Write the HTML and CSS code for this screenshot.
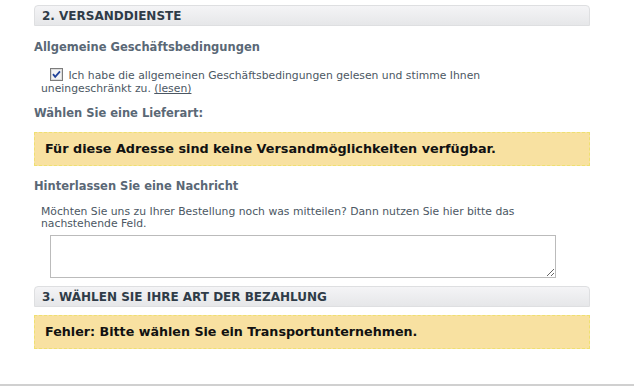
FILE: index.html
```html
<!DOCTYPE html>
<html lang="de">
<head>
    <meta charset="UTF-8">
    <meta name="viewport" content="width=device-width, initial-scale=1.0">
    <title>Kasse</title>
    <link rel="stylesheet" href="styles.css">
</head>
<body>
    <div class="checkout">
        <!-- Versand -->
        <div class="section-head">2. VERSANDDIENSTE</div>

        <h3 class="sub-title">Allgemeine Geschäftsbedingungen</h3>
        <p class="terms">
            <label class="check" for="agb">
                <input type="checkbox" id="agb" checked>
                <svg width="13" height="13" viewBox="0 0 13 13">
                    <rect x="0.5" y="0.5" width="12" height="12" fill="#f4f4f4" stroke="#7c7c7c"/>
                    <rect x="1.5" y="1.5" width="10" height="10" fill="none" stroke="#dcdcdc"/>
                    <path d="M3 6.2 L5.2 8.8 L10 3.4" fill="none" stroke="#23449a" stroke-width="1.8"/>
                </svg>
            </label>
            <span>Ich habe die allgemeinen Geschäftsbedingungen gelesen und stimme Ihnen uneingeschränkt zu. <a href="#">(lesen)</a></span>
        </p>

        <h3 class="sub-title choose">Wählen Sie eine Lieferart:</h3>
        <div class="warning">Für diese Adresse sind keine Versandmöglichkeiten verfügbar.</div>

        <h3 class="sub-title message">Hinterlassen Sie eine Nachricht</h3>
        <p class="hint">Möchten Sie uns zu Ihrer Bestellung noch was mitteilen? Dann nutzen Sie hier bitte das nachstehende Feld.</p>
        <textarea class="note" rows="3"></textarea>

        <!-- Bezahlung -->
        <div class="section-head">3. WÄHLEN SIE IHRE ART DER BEZAHLUNG</div>
        <div class="warning error">Fehler: Bitte wählen Sie ein Transportunternehmen.</div>
    </div>
    <div class="page-foot"></div>
</body>
</html>
```

FILE: styles.css
```css
body, html {
    margin: 0;
    height: 100%;
    overflow: hidden;
    background-color: #fff;
    font-family: "DejaVu Sans", Verdana, sans-serif;
}

.checkout {
    width: 556px;
    padding: 5px 0 0 34px;
}

.section-head {
    height: 19px;
    line-height: 20px;
    padding-left: 7px;
    border: 1px solid #dedfe1;
    border-radius: 4px 4px 0 0;
    background: linear-gradient(#f4f4f6, #e6e7e9);
    color: #2f3c48;
    font-size: 12px;
    font-weight: bold;
}

.sub-title {
    margin: 13px 0 0;
    color: #5a6876;
    font-size: 11.5px;
    font-weight: bold;
    line-height: 16px;
}

.terms {
    margin: 13px 0 0;
    padding: 0 20px 0 7px;
    color: #4b5763;
    font-size: 10.8px;
    line-height: 13px;
}

.check input {
    display: none;
}

.check svg {
    margin: 0 2px 0 9px;
    vertical-align: -2px;
}

.terms a {
    color: #4b5763;
}

.choose {
    margin-top: 10px;
}

.warning {
    margin-top: 11px;
    padding: 8px 10px;
    border: 1px dashed #efe070;
    background-color: #f8e1a1;
    color: #111;
    font-size: 12.8px;
    font-weight: bold;
    line-height: 16px;
}

.error {
    margin-top: 8px;
    font-size: 12.7px;
}

.message {
    margin-top: 12px;
}

.hint {
    margin: 12px 0 0;
    padding: 0 20px 0 7px;
    color: #4b5763;
    font-size: 10.8px;
    line-height: 12px;
}

.note {
    display: block;
    width: 504px;
    height: 41px;
    margin: 5px 0 8px 16px;
    border: 1px solid #bbb;
    padding: 0;
    resize: vertical;
}

.page-foot {
    margin-top: 35px;
    border-top: 2px solid #d0d0d0;
}
```
